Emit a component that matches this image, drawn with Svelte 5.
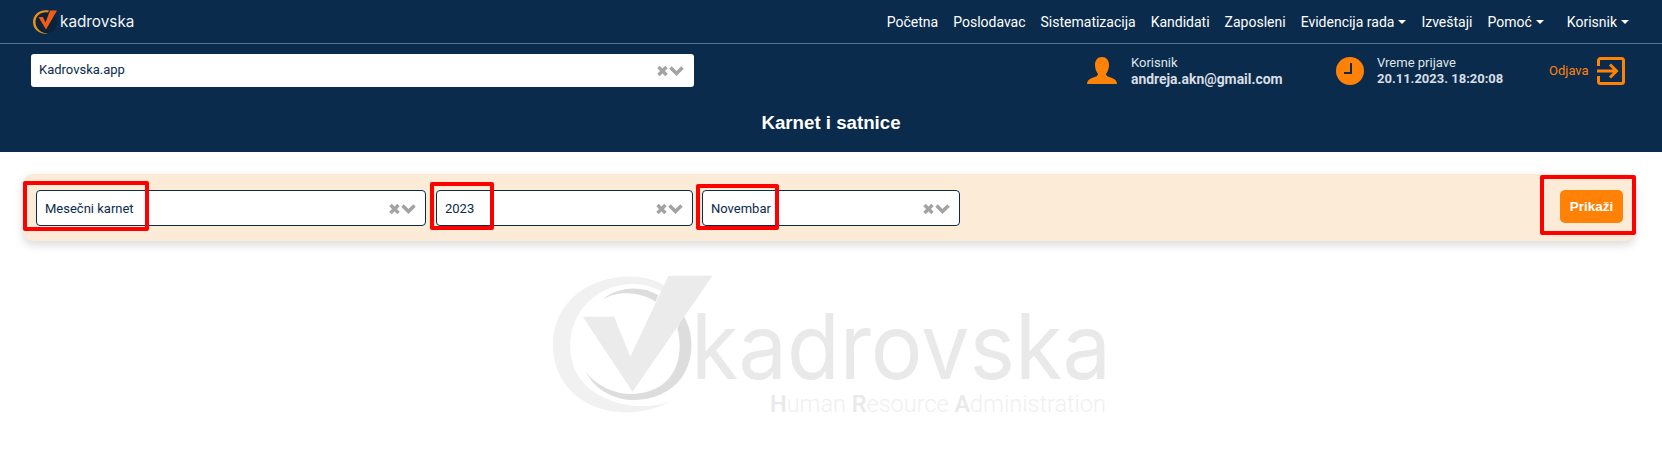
<script lang="ts">
	const navLinks = [
		{ label: 'Početna' },
		{ label: 'Poslodavac' },
		{ label: 'Sistematizacija' },
		{ label: 'Kandidati' },
		{ label: 'Zaposleni' },
		{ label: 'Evidencija rada', caret: true },
		{ label: 'Izveštaji' },
		{ label: 'Pomoć', caret: true }
	];

	const filters = [
		{ value: 'Mesečni karnet', size: 'type' },
		{ value: '2023', size: 'year' },
		{ value: 'Novembar', size: 'month' }
	];
</script>

{#snippet selectIcons()}
	<svg class="select-icons" viewBox="0 0 26 12" aria-hidden="true">
		<path d="M1 2 L9 10 M9 2 L1 10" stroke="currentColor" stroke-width="3.4" fill="none" />
		<path d="M13 2.5 L19 8.5 L25 2.5" stroke="currentColor" stroke-width="3.6" fill="none" />
	</svg>
{/snippet}

<header class="header">
	<div class="topbar">
		<a class="brand" href="#home">
			<svg class="brand-mark" viewBox="0 0 28 26" aria-hidden="true">
				<circle cx="14" cy="13" r="11" fill="#0d2238" />
				<path d="M17 1.6 C8 -0.5 1 5.5 1 13 C1 20.5 8 26 16 24.5 C10 24.5 3.5 20 3.5 13 C3.5 7 9 2.5 16 3.5 Z" fill="#e8921a" />
				<path d="M6.5 8 L11 8 L13.5 13.5 L18 1.5 L25 1.5 L14 20.5 Z" fill="#f25c19" />
			</svg>
			<span class="brand-name">kadrovska</span>
		</a>
		<nav class="nav">
			{#each navLinks as link}
				<a class="nav-link" class:caret={link.caret} href="#nav">{link.label}</a>
			{/each}
			<a class="nav-link caret user-link" href="#nav">Korisnik</a>
		</nav>
	</div>

	<div class="info-row">
		<div class="company-select">
			<span>Kadrovska.app</span>
			{@render selectIcons()}
		</div>
		<div class="info user-info">
			<svg class="info-icon" viewBox="0 0 30 27" aria-hidden="true">
				<path d="M15 0 C19.5 0 22 3.5 22 8 C22 12 20.5 15 19 17 C19 19 22 20 25 21 C28 22 30 24 30 27 L0 27 C0 24 2 22 5 21 C8 20 11 19 11 17 C9.5 15 8 12 8 8 C8 3.5 10.5 0 15 0 Z" fill="#ff8207" />
			</svg>
			<div class="info-text">
				<span>Korisnik</span>
				<strong class="email">andreja.akn@gmail.com</strong>
			</div>
		</div>
		<div class="info time-info">
			<svg class="info-icon clock" viewBox="0 0 28 28" aria-hidden="true">
				<circle cx="14" cy="14" r="14" fill="#ff8207" />
				<path d="M15 6 V16 H8" stroke="#0a2b4c" stroke-width="2" fill="none" />
			</svg>
			<div class="info-text">
				<span>Vreme prijave</span>
				<strong>20.11.2023. 18:20:08</strong>
			</div>
		</div>
		<a class="logout" href="#logout">
			<span>Odjava</span>
			<svg class="logout-icon" viewBox="0 0 28 28" aria-hidden="true">
				<path d="M1.5 9 V3.5 A2 2 0 0 1 3.5 1.5 H24.5 A2 2 0 0 1 26.5 3.5 V24.5 A2 2 0 0 1 24.5 26.5 H3.5 A2 2 0 0 1 1.5 24.5 V19" stroke="currentColor" stroke-width="3" fill="none" />
				<path d="M0 14 H19 M13 7.5 L19.5 14 L13 20.5" stroke="currentColor" stroke-width="3" fill="none" />
			</svg>
		</a>
	</div>

	<h1 class="title">Karnet i satnice</h1>
</header>

<main class="content">
	<section class="filter-bar">
		{#each filters as filter}
			<div class="filter-select {filter.size}">
				<span>{filter.value}</span>
				{@render selectIcons()}
			</div>
		{/each}
		<button class="show-button">Prikaži</button>

		<!-- annotations drawn over the screenshot -->
		<span class="mark mark-type"></span>
		<span class="mark mark-year"></span>
		<span class="mark mark-month"></span>
		<span class="mark mark-button"></span>
	</section>

	<svg class="watermark" viewBox="0 0 600 180" aria-label="kadrovska">
		<g transform="scale(0.3827 0.3333)">
			<path d="M350 75 C250 10 60 70 60 255 C60 430 230 510 375 420 C280 470 105 420 105 260 C105 110 240 30 345 95 Z" fill="#f1f1f1" />
			<path d="M190 118 C230 80 290 75 335 105 L328 125 C290 95 230 90 190 118 Z" fill="#dddddd" />
			<path d="M400 165 C430 220 430 300 395 355 C340 440 200 450 145 335 C190 400 270 420 330 385 C390 350 400 270 385 205 Z" fill="#dddddd" />
			<path d="M138 170 L220 170 L262 290 L362 47 L477 47 L268 395 Z" fill="#ebebeb" />
		</g>
		<text class="wm-name" x="161" y="119" textLength="420" lengthAdjust="spacingAndGlyphs">kadrovska</text>
		<text class="wm-tag" x="240" y="151.5" textLength="336" lengthAdjust="spacingAndGlyphs"><tspan class="wm-initial">H</tspan>uman <tspan class="wm-initial">R</tspan>esource <tspan class="wm-initial">A</tspan>dministration</text>
	</svg>
</main>

<style>
	:global(body) {
		margin: 0;
		background: #fff;
		font-family: Roboto, 'Liberation Sans', sans-serif;
	}

	a {
		text-decoration: none;
	}

	/* Header */
	.header {
		height: 152px;
		background: #0a2b4c;
		color: #fff;
		box-sizing: border-box;
	}

	.topbar {
		display: flex;
		align-items: center;
		justify-content: space-between;
		height: 43px;
		border-bottom: 1px solid #5a7390;
		padding: 0 33px 0 32px;
	}

	.brand {
		display: flex;
		align-items: center;
		gap: 0;
		color: #f2f5f8;
	}

	.brand-mark {
		width: 28px;
		height: 26px;
	}

	.brand-name {
		font-family: Inter, sans-serif;
		font-size: 15.3px;
		font-weight: 400;
	}

	.nav {
		display: flex;
		align-items: center;
		gap: 15px;
	}

	.nav-link {
		color: #fff;
		font-size: 14px;
		white-space: nowrap;
	}

	.caret::after {
		content: '';
		display: inline-block;
		margin-left: 4px;
		vertical-align: 3px;
		border-top: 4px solid #fff;
		border-left: 4px solid transparent;
		border-right: 4px solid transparent;
	}

	.user-link {
		margin-left: 8px;
	}

	.info-row {
		display: flex;
		align-items: center;
		padding: 10px 36px 0 31px;
		height: 33px;
	}

	.company-select {
		display: flex;
		align-items: center;
		justify-content: space-between;
		width: 663px;
		height: 33px;
		box-sizing: border-box;
		padding: 0 10px 2px 8px;
		background: #fff;
		border-radius: 3px;
		color: #0a2b4c;
		font-size: 13px;
	}

	.select-icons {
		width: 27px;
		height: 12px;
		color: #a3a3a3;
		flex-shrink: 0;
		margin-top: 2px;
	}

	.info {
		display: flex;
		align-items: center;
		color: #dfe5ea;
	}

	.user-info {
		margin-left: 393px;
		gap: 14px;
		width: 249px;
	}

	.time-info {
		gap: 13px;
		width: 213px;
	}

	.info-icon {
		width: 30px;
		height: 27px;
		flex-shrink: 0;
	}

	.clock {
		width: 28px;
		height: 28px;
	}

	.info-text {
		display: flex;
		flex-direction: column;
		gap: 2px;
		font-size: 13px;
		line-height: 14px;
	}

	.info-text strong {
		font-weight: 700;
		color: #d8dee4;
	}

	.info-text .email {
		font-size: 13.9px;
	}

	.logout {
		display: flex;
		align-items: center;
		gap: 8px;
		color: #ff8207;
		font-size: 13px;
	}

	.logout-icon {
		width: 28px;
		height: 28px;
	}

	.title {
		margin: 0;
		padding-top: 25px;
		text-align: center;
		font-size: 18.7px;
		line-height: 22px;
		font-weight: 700;
		font-family: 'Liberation Sans', sans-serif;
	}

	/* Filter bar */
	.content {
		display: flex;
		flex-direction: column;
		align-items: center;
		padding: 22px 27px 0 23px;
	}

	.filter-bar {
		position: relative;
		display: flex;
		align-items: flex-start;
		align-self: stretch;
		gap: 9px;
		height: 67px;
		box-sizing: border-box;
		padding: 16px 12px 0 13px;
		background: #fbebd7;
		border-radius: 10px;
		box-shadow: 0 4px 10px rgba(0, 0, 0, 0.15);
	}

	.filter-select {
		display: flex;
		align-items: center;
		justify-content: space-between;
		height: 36px;
		box-sizing: border-box;
		padding: 0 9px 0 8px;
		background: #fff;
		border: 1px solid #0a2b4c;
		border-radius: 4px;
		color: #0a2b4c;
		font-size: 13px;
	}

	.type {
		width: 390px;
		margin-right: 1px;
	}

	.year {
		width: 257px;
	}

	.month {
		width: 258px;
	}

	.show-button {
		margin-left: auto;
		width: 63px;
		height: 33px;
		padding: 0;
		border: none;
		border-radius: 5px;
		background: #ff8207;
		color: #fff;
		font-family: 'Liberation Sans', sans-serif;
		font-size: 13.5px;
		font-weight: 700;
	}

	.mark {
		position: absolute;
		border: 4px solid #f00;
		border-radius: 2px;
		box-sizing: border-box;
		pointer-events: none;
	}

	.mark-type {
		left: 0;
		top: 7px;
		width: 126px;
		height: 50px;
	}

	.mark-year {
		left: 407px;
		top: 8px;
		width: 64px;
		height: 48px;
	}

	.mark-month {
		left: 673px;
		top: 10px;
		width: 83px;
		height: 46px;
	}

	.mark-button {
		left: 1517px;
		top: 1px;
		width: 96px;
		height: 60px;
	}

	/* Watermark */
	.watermark {
		width: 600px;
		height: 180px;
		margin-top: 19px;
		margin-left: 2px;
	}

	.wm-name {
		font-family: Inter, sans-serif;
		font-size: 91px;
		font-weight: 400;
		fill: #e9e9e9;
	}

	.wm-tag {
		font-family: Roboto, sans-serif;
		font-size: 24px;
		font-weight: 300;
		fill: #f0f0f0;
	}

	.wm-initial {
		font-weight: 500;
		fill: #e9e9e9;
	}
</style>
